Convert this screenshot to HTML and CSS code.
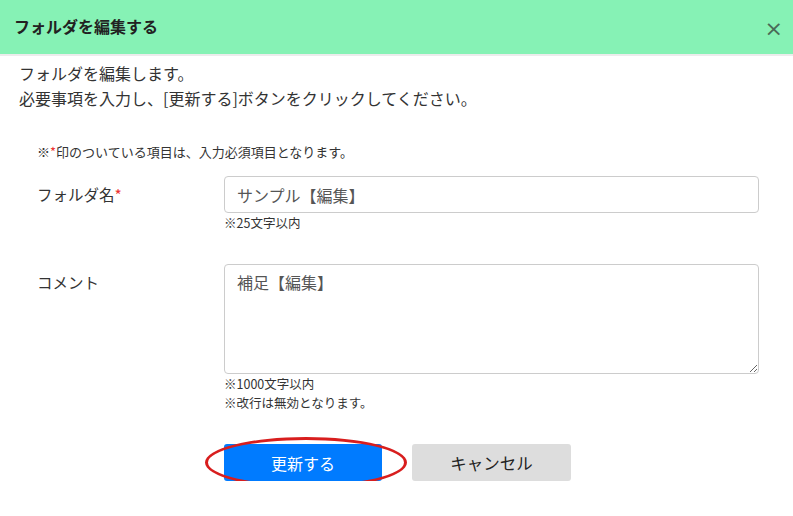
FILE: index.html
```html
<!DOCTYPE html>
<html lang="ja">
<head>
    <meta charset="UTF-8">
    <meta name="viewport" content="width=device-width, initial-scale=1.0">
    <title>フォルダを編集する</title>
    <link rel="stylesheet" href="styles.css">
</head>
<body>
    <div class="modal">
        <div class="modal-header">
            <h1>フォルダを編集する</h1>
            <button class="close-btn">×</button>
        </div>
        <div class="modal-body">
            <p class="lead">フォルダを編集します。<br>必要事項を入力し、[更新する]ボタンをクリックしてください。</p>
            <p class="note">※<span class="req">*</span>印のついている項目は、入力必須項目となります。</p>

            <div class="row">
                <label class="label">フォルダ名<span class="req">*</span></label>
                <div class="field">
                    <input type="text" class="input" value="サンプル【編集】">
                    <div class="hint">※25文字以内</div>
                </div>
            </div>

            <div class="row row-comment">
                <label class="label">コメント</label>
                <div class="field">
                    <textarea class="input textarea">補足【編集】</textarea>
                    <div class="hint">※1000文字以内<br>※改行は無効となります。</div>
                </div>
            </div>

            <div class="actions">
                <div class="mark">
                    <button class="btn btn-primary">更新する</button>
                    <span class="circle"></span>
                </div>
                <button class="btn btn-cancel">キャンセル</button>
            </div>
        </div>
    </div>
</body>
</html>
```

FILE: styles.css
```css
* {
    margin: 0;
    padding: 0;
    box-sizing: border-box;
}
body {
    background: #fff;
    color: #333;
    font-family: "Noto Sans CJK JP", "Liberation Sans", sans-serif;
}
.modal-header {
    height: 56px;
    background: #86f2b5;
    border-bottom: 2px solid #ececec;
    display: flex;
    align-items: center;
    justify-content: space-between;
    padding: 0 14px 2px 14px;
}
.modal-header h1 {
    font-size: 16px;
    font-weight: bold;
    color: #222;
}
.close-btn {
    background: none;
    border: none;
    font-size: 22px;
    color: #4a6a58;
    font-family: "DejaVu Sans", sans-serif;
    cursor: pointer;
    margin-top: 4px;
    margin-right: -4px;
}
.modal-body {
    padding: 5px 0 0 19px;
}
.lead {
    font-size: 16px;
    line-height: 25px;
    color: #333;
}
.note {
    font-size: 13px;
    line-height: 18px;
    margin: 32px 0 0 18px;
}
.req {
    color: #e33;
}
.row {
    display: flex;
    margin-top: 15px;
    padding-left: 18px;
}
.row-comment {
    margin-top: 32px;
}
.label {
    width: 187px;
    font-size: 15.5px;
    line-height: 37px;
}
.row-comment .label {
    line-height: 36px;
}
.field {
    width: 535px;
}
.input {
    width: 535px;
    height: 37px;
    border: 1px solid #ccc;
    border-radius: 4px;
    padding: 0 12px;
    font-size: 16px;
    color: #555;
    font-family: "Noto Sans CJK JP", "Liberation Sans", sans-serif;
}
.textarea {
    height: 110px;
    display: block;
    padding: 6px 12px;
    line-height: 22px;
    resize: vertical;
}
.hint {
    font-size: 12.5px;
    line-height: 19px;
    color: #333;
}
.actions {
    display: flex;
    gap: 30px;
    margin-top: 32px;
    padding-left: 205px;
}
.mark {
    position: relative;
}
.btn {
    width: 158px;
    height: 37px;
    border: none;
    border-radius: 3px;
    font-size: 16px;
    font-family: "Noto Sans CJK JP", "Liberation Sans", sans-serif;
    cursor: pointer;
}
.btn-primary {
    background: #007bff;
    color: #fff;
}
.btn-cancel {
    background: #ddd;
    color: #222;
    width: 159px;
    font-size: 16.5px;
}
.circle {
    position: absolute;
    left: -19px;
    top: -7px;
    width: 202px;
    height: 51px;
    border: 3px solid #d81e1e;
    border-radius: 50%;
}
```
